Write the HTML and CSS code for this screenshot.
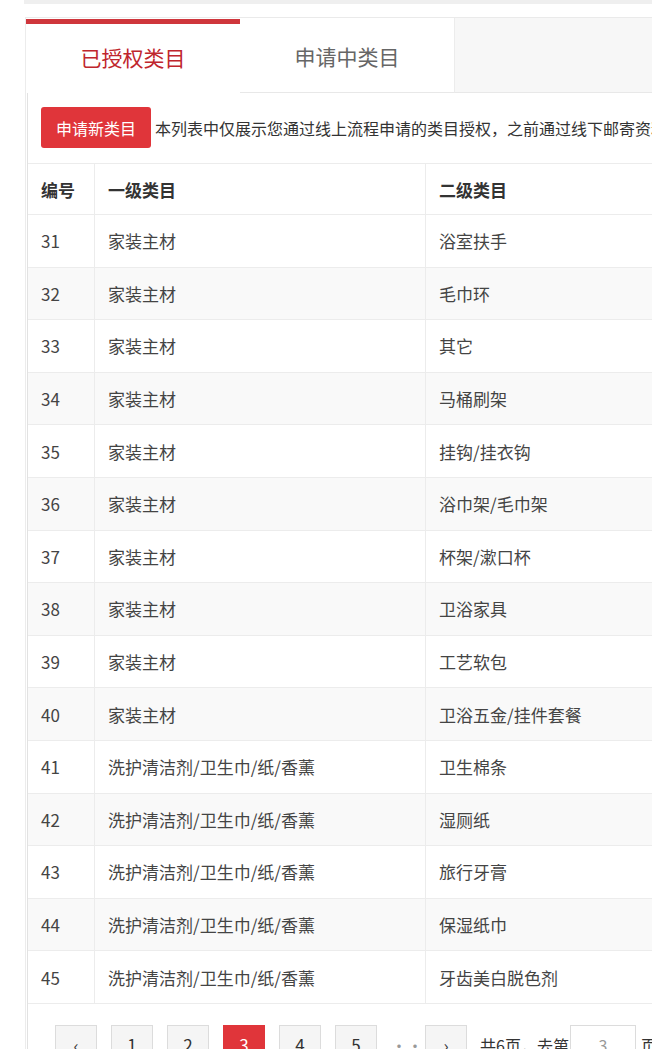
FILE: index.html
```html
<!DOCTYPE html>
<html lang="zh-CN">
<head>
<meta charset="utf-8">
<title>类目授权</title>
<link rel="stylesheet" href="styles.css">
</head>
<body>
<div class="topbar"></div>
<div class="wrap">
  <div class="tabs">
    <div class="tab active">已授权类目</div>
    <div class="tab">申请中类目</div>
    <div class="tab-rest"></div>
  </div>
  <div class="panel">
    <div class="toolbar">
      <button class="btn-apply">申请新类目</button>
      <span class="note">本列表中仅展示您通过线上流程申请的类目授权，之前通过线下邮寄资料申请的类目授权请联系客服查询</span>
    </div>
    <table class="grid">
      <thead>
        <tr><th class="c1">编号</th><th class="c2">一级类目</th><th class="c3">二级类目</th></tr>
      </thead>
      <tbody>
        <tr><td>31</td><td>家装主材</td><td>浴室扶手</td></tr>
        <tr><td>32</td><td>家装主材</td><td>毛巾环</td></tr>
        <tr><td>33</td><td>家装主材</td><td>其它</td></tr>
        <tr><td>34</td><td>家装主材</td><td>马桶刷架</td></tr>
        <tr><td>35</td><td>家装主材</td><td>挂钩/挂衣钩</td></tr>
        <tr><td>36</td><td>家装主材</td><td>浴巾架/毛巾架</td></tr>
        <tr><td>37</td><td>家装主材</td><td>杯架/漱口杯</td></tr>
        <tr><td>38</td><td>家装主材</td><td>卫浴家具</td></tr>
        <tr><td>39</td><td>家装主材</td><td>工艺软包</td></tr>
        <tr><td>40</td><td>家装主材</td><td>卫浴五金/挂件套餐</td></tr>
        <tr><td>41</td><td>洗护清洁剂/卫生巾/纸/香薰</td><td>卫生棉条</td></tr>
        <tr><td>42</td><td>洗护清洁剂/卫生巾/纸/香薰</td><td>湿厕纸</td></tr>
        <tr><td>43</td><td>洗护清洁剂/卫生巾/纸/香薰</td><td>旅行牙膏</td></tr>
        <tr><td>44</td><td>洗护清洁剂/卫生巾/纸/香薰</td><td>保湿纸巾</td></tr>
        <tr><td>45</td><td>洗护清洁剂/卫生巾/纸/香薰</td><td>牙齿美白脱色剂</td></tr>
      </tbody>
    </table>
    <div class="pager">
      <span class="pg">&lsaquo;</span>
      <span class="pg">1</span>
      <span class="pg">2</span>
      <span class="pg current">3</span>
      <span class="pg">4</span>
      <span class="pg">5</span>
      <span class="dots">···</span>
      <span class="pg">&rsaquo;</span>
      <span class="total">共6页，去第</span>
      <span class="goto">3</span>
      <span class="unit">页</span>
    </div>
  </div>
</div>
</body>
</html>
```

FILE: styles.css
```css
html, body {
  margin: 0;
  padding: 0;
  background: #fff;
}
body {
  width: 652px;
  height: 1049px;
  overflow: hidden;
  font-family: "Noto Sans CJK SC", "Noto Sans", sans-serif;
  color: #333;
}
.topbar {
  height: 4px;
  margin-left: 24px;
  width: 900px;
  background: #efefef;
}
.wrap {
  margin-top: 13px;
  margin-left: 25px;
  width: 1000px;
  border-left: 1px solid #ececec;
}
.tabs {
  display: flex;
  height: 75px;
  border-top: 1px solid #eaeaea;
}
.tab {
  width: 214px;
  display: flex;
  align-items: center;
  justify-content: center;
  font-size: 21px;
  color: #666;
  background: #fff;
  border-right: 1px solid #ececec;
  box-sizing: border-box;
}
.tab.active {
  color: #bf262d;
  border-top: 5px solid #cf363c;
  margin-top: 1px;
  height: 74px;
  padding-bottom: 4px;
  border-right: none;
}
.tab:not(.active) {
  width: 215px;
  padding-top: 2px;
  border-bottom: 1px solid #e8e8e8;
}
.tab-rest {
  flex: 1;
  background: #f7f7f7;
  border-bottom: 1px solid #e8e8e8;
}
.panel {
  margin-left: 1px;
  border-left: 1px solid #e2e2e2;
  border-top: 1px solid #e6e6e6;
  margin-top: -1px;
}
.toolbar {
  display: flex;
  align-items: center;
  padding: 14px 0 15px 13px;
  white-space: nowrap;
}
.btn-apply {
  width: 110px;
  height: 41px;
  border: none;
  border-radius: 3px;
  background: #e0353a;
  color: #fff;
  font-family: inherit;
  font-size: 16px;
  padding: 0;
  flex-shrink: 0;
}
.note {
  margin-left: 4px;
  font-size: 16px;
  color: #333;
}
.grid {
  border-collapse: collapse;
  table-layout: fixed;
  width: 960px;
  font-size: 17px;
}
.grid th, .grid td {
  text-align: left;
  padding: 0 0 0 13px;
  border-top: 1px solid #ececec;
  border-right: 1px solid #ececec;
  white-space: nowrap;
}
.grid th {
  height: 50px;
  font-weight: bold;
  color: #333;
}
.grid td {
  height: 51.6px;
  color: #444;
}
.grid tbody tr:nth-child(even) td {
  background: #f9f9f9;
}
.grid tbody tr:last-child td {
  border-bottom: 1px solid #ececec;
}
.c1 { width: 53px; }
.c2 { width: 317px; }
.pager {
  display: flex;
  align-items: center;
  padding: 21px 0 0 27px;
  white-space: nowrap;
  font-size: 16px;
  color: #333;
}
.pg {
  width: 42px;
  height: 40px;
  box-sizing: border-box;
  border: 1px solid #dcdcdc;
  background: #f5f5f5;
  display: flex;
  align-items: center;
  justify-content: center;
  margin-right: 14px;
  font-size: 17px;
  color: #333;
  flex-shrink: 0;
}
.pg.current {
  background: #e0353a;
  border-color: #e0353a;
  color: #fff;
}
.dots {
  width: 20px;
  margin-right: 14px;
  color: #999;
  text-align: center;
}
.total {
  margin-left: -1px;
}
.goto {
  width: 66px;
  height: 40px;
  box-sizing: border-box;
  border: 1px solid #dcdcdc;
  background: #fff;
  margin-left: 1px;
  display: flex;
  align-items: center;
  justify-content: center;
  color: #999;
  flex-shrink: 0;
}
.unit {
  margin-left: 5px;
}
```
